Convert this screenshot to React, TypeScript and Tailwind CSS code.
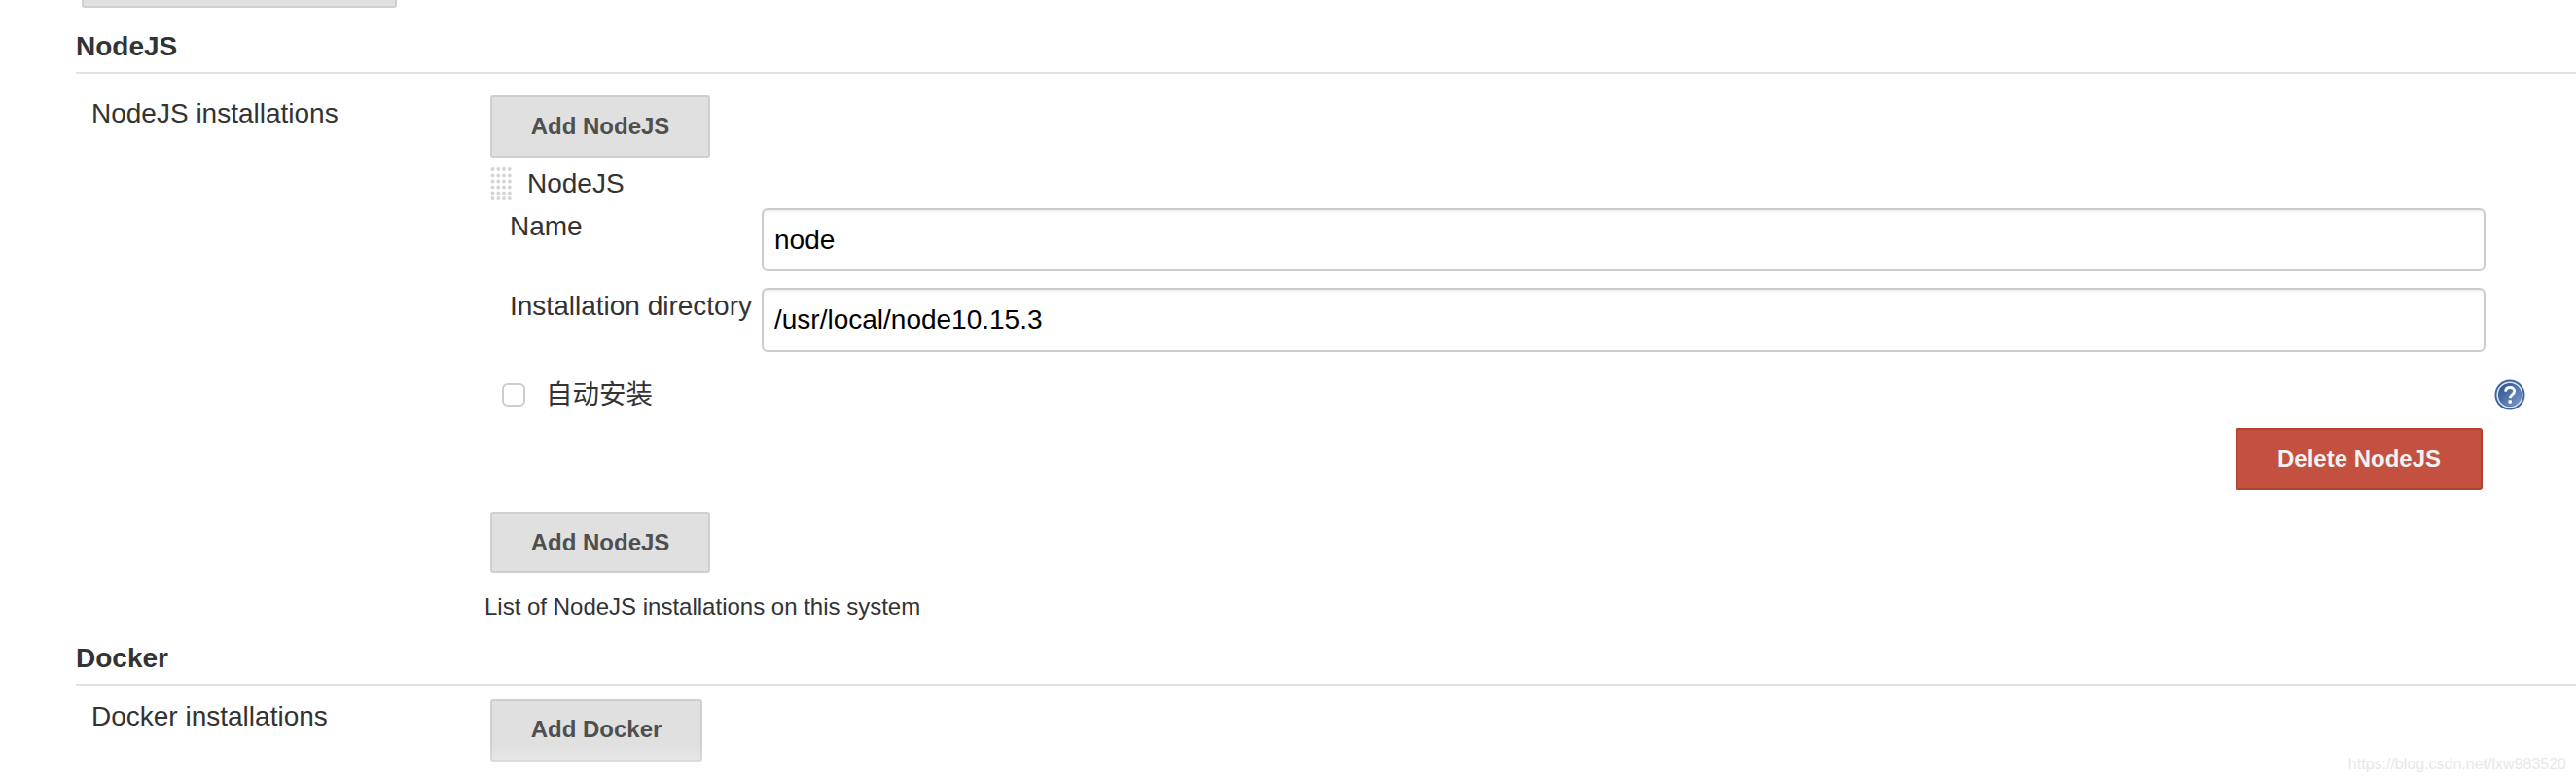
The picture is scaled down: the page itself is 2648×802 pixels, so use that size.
const AddButton = ({ label, className }: { label: string; className: string }) => (
  <button
    type="button"
    className={`block rounded-[3px] border-2 border-[#cfcfcf] bg-[#e0e0e0] text-center text-[24px] leading-[32px] font-bold text-[#4f4f4f] ${className}`}
  >
    {label}
  </button>
);

const SectionHeading = ({ title, className }: { title: string; className: string }) => (
  <h3 className={`border-b-2 border-[#e2e2e2] pb-[10px] text-[28px] leading-[32px] font-bold text-[#333333] ${className}`}>
    {title}
  </h3>
);

// drag handle next to the block title
const GripDots = () => {
  const cols = [2.5, 8.3, 14, 19.8];
  const rows = [3, 9.5, 15.5, 21.5, 27.5, 33];
  return (
    <svg width="23" height="36" viewBox="0 0 23 36" className="shrink-0">
      {rows.map((y) =>
        cols.map((x) => <circle key={`${x}-${y}`} cx={x} cy={y} r="1.9" fill="#d4d4d4" />),
      )}
    </svg>
  );
};

const HelpIcon = () => (
  <svg width="32" height="32" viewBox="0 0 32 32" className="shrink-0">
    <defs>
      <linearGradient id="helpFill" x1="0" y1="0" x2="1" y2="1">
        <stop offset="0" stopColor="#28508f" />
        <stop offset="1" stopColor="#7f9cc6" />
      </linearGradient>
    </defs>
    <circle cx="16" cy="16" r="15.5" fill="#3e659f" />
    <circle cx="16" cy="16" r="12.8" fill="none" stroke="#dbe4f0" strokeWidth="1.6" />
    <circle cx="16" cy="16" r="11.6" fill="url(#helpFill)" />
    <path d="M11.5 12.6c.3-2.7 2.2-4.1 4.7-4.1 2.6 0 4.5 1.5 4.5 3.8 0 3.4-4.2 3.4-4.4 6.8" fill="none" stroke="#ffffff" strokeWidth="2.8" />
    <circle cx="16.2" cy="23" r="1.9" fill="#ffffff" />
  </svg>
);

const TextField = ({ label, value, className }: { label: string; value: string; className: string }) => (
  <div className={`flex pl-[20px] ${className}`}>
    <label className="w-[259px] shrink-0 pt-[3px] text-[28px] leading-[32px] whitespace-nowrap text-[#333333]">{label}</label>
    <input
      readOnly
      value={value}
      className="h-full w-[1772px] rounded-[6px] border-2 border-[#cccccc] bg-white pl-[11px] text-[28px] text-black shadow-[inset_0_2px_2px_rgba(0,0,0,0.06)] outline-none"
    />
  </div>
);

export default function App() {
  return (
    <div className="relative h-[802px] w-[2648px] overflow-hidden bg-white font-['Liberation_Sans','Noto_Sans_CJK_SC',sans-serif]">
      <div className="ml-[84px] h-[8px] w-[324px] rounded-b-[3px] border-x-2 border-b-2 border-[#cfcfcf] bg-[#e0e0e0]" />

      <div className="pl-[78px]">
        <SectionHeading title="NodeJS" className="mt-[24px]" />

        <div className="flex">
          <div className="w-[426px] shrink-0 pt-[25px] pl-[16px] text-[28px] leading-[32px] text-[#333333]">NodeJS installations</div>
          <div className="w-[2092px] pt-[22px]">
            <AddButton label="Add NodeJS" className="h-[64px] w-[226px] pb-[1px]" />

            <div className="mt-[9px] flex h-[36px] items-center gap-[15px]">
              <GripDots />
              <span className="text-[28px] leading-[32px] text-[#333333]">NodeJS</span>
            </div>

            <TextField label="Name" value="node" className="mt-[7px] h-[65px]" />
            <TextField label="Installation directory" value="/usr/local/node10.15.3" className="mt-[17px] h-[66px]" />

            <div className="mt-[28px] flex h-[32px] items-center pl-[12px]">
              <input type="checkbox" readOnly className="h-[24px] w-[24px] appearance-none rounded-[6px] border-2 border-[#cccccc] bg-white" />
              <span className="ml-[21px] text-[27.5px] leading-[32px] text-[#333333]">自动安装</span>
              <span className="ml-auto">
                <HelpIcon />
              </span>
            </div>

            <div className="mt-[18px] flex justify-end pr-[44px]">
              <button
                type="button"
                className="h-[64px] w-[254px] rounded-[3px] border-2 border-[#b0412f] bg-[#c4513f] text-[24px] font-bold text-[#f2f2f2]"
              >
                Delete NodeJS
              </button>
            </div>

            <AddButton label="Add NodeJS" className="mt-[22px] h-[63px] w-[226px]" />
            <p className="mt-[21px] -ml-[6px] text-[24px] leading-[28px] text-[#333333]">List of NodeJS installations on this system</p>
          </div>
        </div>

        <SectionHeading title="Docker" className="mt-[23px]" />

        <div className="flex">
          <div className="w-[426px] shrink-0 pt-[16px] pl-[16px] text-[28px] leading-[32px] text-[#333333]">Docker installations</div>
          <div className="pt-[14px]">
            <AddButton label="Add Docker" className="h-[64px] w-[218px] pb-[3px]" />
          </div>
        </div>
      </div>

      {/* csdn watermark strip */}
      <div className="absolute inset-x-0 bottom-0 h-[34px] bg-gradient-to-b from-white/0 to-white/60">
        <span className="absolute right-[10px] bottom-[6px] text-[16px] leading-[20px] text-[#e8e8e8]">https://blog.csdn.net/lxw983520</span>
      </div>
    </div>
  );
}
